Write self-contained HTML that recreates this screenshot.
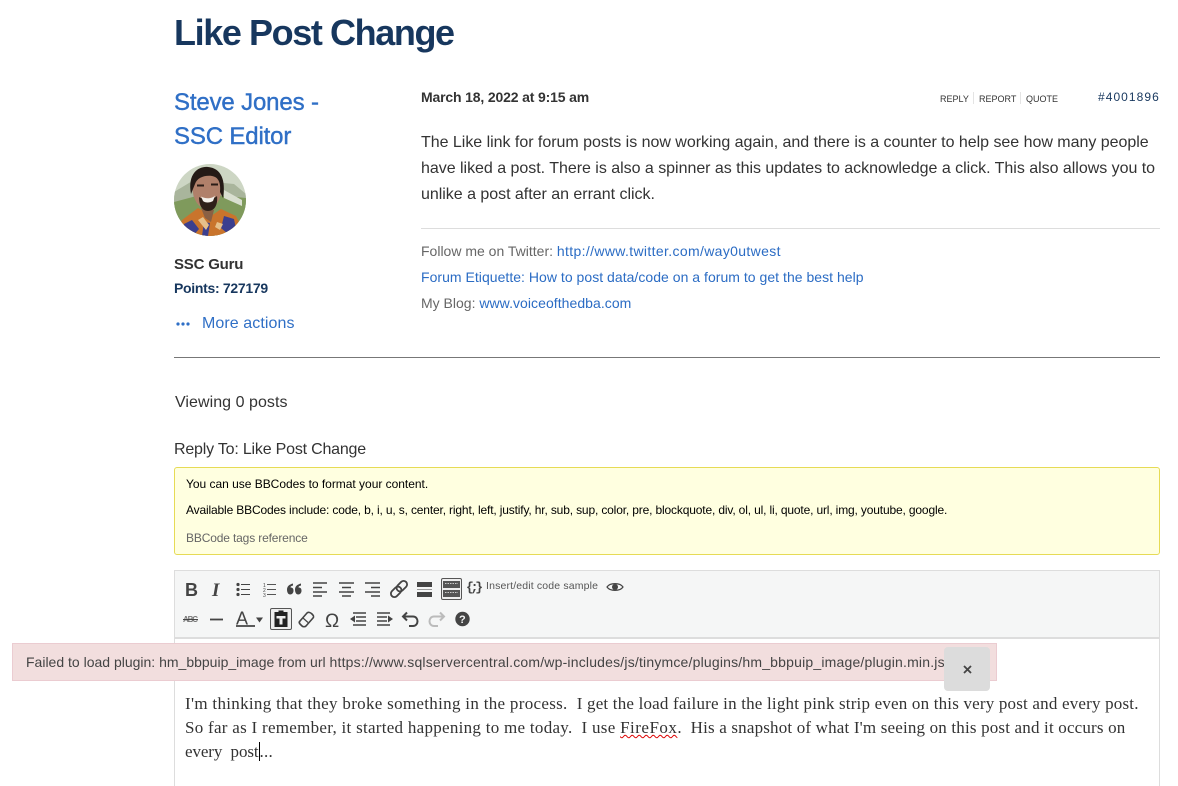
<!DOCTYPE html>
<html><head><meta charset="utf-8"><style>
html,body{margin:0;padding:0;background:#fff;width:1178px;height:786px;overflow:hidden}
body{position:relative;font-family:"Liberation Sans",sans-serif;color:#333}
.t{position:absolute;white-space:nowrap}
a{color:#2b6cc4;text-decoration:none}
svg{position:absolute;overflow:visible}
.b{position:absolute}
.ser{font-family:"Liberation Serif",serif;font-size:17px;color:#333;letter-spacing:.235px}
</style></head><body>
<div class="t" style="left:174px;top:11px;font-size:36px;font-weight:700;color:#17375e;line-height:44px;letter-spacing:-1.4px">Like Post Change</div>
<div class="t" style="left:174px;top:86px;font-size:24px;color:#2f6fc6;line-height:34px;letter-spacing:-.15px;-webkit-text-stroke:.4px #2f6fc6">Steve Jones -<br>SSC Editor</div>
<svg style="left:174px;top:164px" width="72" height="72" viewBox="0 0 72 72">
<defs><clipPath id="c"><circle cx="36" cy="36" r="36"/></clipPath></defs>
<g clip-path="url(#c)"><rect width="72" height="72" fill="#cdd6c4"/><path d="M0 28L20 16 60 20 72 30V72H0Z" fill="#a9b59c"/><path d="M0 38L30 30 72 34V72H0Z" fill="#7f9a5c"/><path d="M50 26l18 10v6l-18-8z" fill="#d9dfd0"/>
<path d="M24 44L31 48 33 53 40 50 47 45 62 52 72 72H0L8 56Z" fill="#c9742c"/><path d="M10 60l8-4 7 9-6 7H8zM50 52l10 3 2 10-8 5-7-6zM30 58l6 1-2 13h-6z" fill="#3b3f8f"/><path d="M24 56l5-3 6 8-3 5zM43 58l6 2-3 6-5-3z" fill="#e6c08a"/><path d="M27 44L40 46 37 58 31 54Z" fill="#8a6044"/>
<ellipse cx="33" cy="24" rx="14.500" ry="21" fill="#b0806a"/><path d="M17 30C13 8 26 2 34 3 47 4 52 16 49 34L46 28C47 18 44 13 38 12 30 11 23 14 21 20Z" fill="#241a16"/>
<path d="M25 33C29 36 39 36 43 32 44 40 41 47 34 47 28 47 25 41 25 33Z" fill="#2e2119"/><path d="M27 32.500C31 35 38 35 41 31.500L39 37C36 39 31 39 29 37Z" fill="#f3f0ea"/><path d="M23 21.500h7M37 20.500h7" stroke="#2a1d17" stroke-width="2"/></g></svg>
<div class="t" style="left:174px;top:255px;font-size:15px;font-weight:700;color:#333;line-height:20px;letter-spacing:-.2px">SSC Guru</div>
<div class="t" style="left:174px;top:280px;font-size:14px;font-weight:700;color:#17375e;line-height:17px;letter-spacing:-.3px">Points: 727179</div>
<svg style="left:176px;top:321px" width="16" height="6"><circle cx="2" cy="3" r="1.600" fill="#2f6fc6"/><circle cx="7" cy="3" r="1.600" fill="#2f6fc6"/><circle cx="12" cy="3" r="1.600" fill="#2f6fc6"/></svg>
<div class="t" style="left:202px;top:314px;font-size:16px;color:#2f6fc6;line-height:19px;letter-spacing:.08px">More actions</div>

<div class="t" style="left:421px;top:89px;font-size:14px;font-weight:700;color:#333;line-height:17px;letter-spacing:-.16px">March 18, 2022 at 9:15 am</div>
<div class="t" style="left:940px;top:93px;font-size:9px;color:#333;line-height:12px">REPLY</div>
<div class="b" style="left:973px;top:92px;width:1px;height:12px;background:#e4e4e4"></div>
<div class="t" style="left:979px;top:93px;font-size:9px;color:#333;line-height:12px">REPORT</div>
<div class="b" style="left:1020px;top:92px;width:1px;height:12px;background:#e4e4e4"></div>
<div class="t" style="left:1026px;top:93px;font-size:9px;color:#333;line-height:12px">QUOTE</div>
<div class="t" style="left:1098px;top:90px;font-size:12px;color:#17375e;line-height:15px;letter-spacing:1.050px">#4001896</div>

<div class="t" style="left:421px;top:130px;font-size:16px;line-height:26px;color:#333;letter-spacing:-.025px">The Like link for forum posts is now working again, and there is a counter to help see how many people<br>have liked a post. There is also a spinner as this updates to acknowledge a click. This also allows you to<br>unlike a post after an errant click.</div>
<div class="b" style="left:421px;top:228px;width:739px;height:1px;background:#ddd"></div>
<div class="t" style="left:421px;top:238px;font-size:14px;line-height:26px;color:#666">Follow me on Twitter: <a style="letter-spacing:.35px">http://www.twitter.com/way0utwest</a><br><a style="letter-spacing:.03px">Forum Etiquette: How to post data/code on a forum to get the best help</a><br>My Blog: <a style="letter-spacing:.05px">www.voiceofthedba.com</a></div>
<div class="b" style="left:174px;top:357px;width:986px;height:1px;background:#777"></div>
<div class="t" style="left:175px;top:393px;font-size:16px;line-height:19px;letter-spacing:.05px">Viewing 0 posts</div>
<div class="t" style="left:174px;top:440px;font-size:16px;line-height:19px;letter-spacing:-.2px">Reply To: Like Post Change</div>

<div class="b" style="left:174px;top:467px;width:984px;height:86px;background:#ffffe0;border:1px solid #e6db55;border-radius:3px"></div>
<div class="t" style="left:186px;top:477px;font-size:12px;line-height:15px;color:#000;letter-spacing:-.02px">You can use BBCodes to format your content.</div>
<div class="t" style="left:186px;top:503px;font-size:12px;line-height:15px;color:#000;letter-spacing:-.155px">Available BBCodes include: code, b, i, u, s, center, right, left, justify, hr, sub, sup, color, pre, blockquote, div, ol, ul, li, quote, url, img, youtube, google.</div>
<div class="t" style="left:186px;top:531px;font-size:12px;line-height:15px;color:#666;letter-spacing:-.15px">BBCode tags reference</div>

<div class="b" style="left:174px;top:570px;width:984px;height:66px;background:#f5f6f6;border:1px solid #ddd;border-bottom:2px solid #ddd"></div>
<div class="b" style="left:174px;top:639px;width:984px;height:147px;background:#fff;border-left:1px solid #ddd;border-right:1px solid #ddd"></div>

<svg style="left:0;top:0" width="1178" height="786" fill="#444" stroke="none">
<text x="185" y="596" font-family="Liberation Sans" font-weight="700" font-size="18" fill="#444">B</text>
<text x="212" y="596" font-family="Liberation Serif" font-weight="700" font-style="italic" font-size="19" fill="#444">I</text>
<path d="M241 584.500h9M241 589.500h9M241 594.500h9" stroke="#444" stroke-width="1.100"/><circle cx="238" cy="584.500" r="1.600"/><circle cx="238" cy="589.500" r="1.600"/><circle cx="238" cy="594.500" r="1.600"/>
<path d="M267 584.500h9M267 589.500h9M267 594.500h9" stroke="#555" stroke-width="1"/><text x="263" y="587" font-family="Liberation Sans" font-size="5" fill="#444">1</text><text x="263" y="592" font-family="Liberation Sans" font-size="5" fill="#444">2</text><text x="263" y="597" font-family="Liberation Sans" font-size="5" fill="#444">3</text>
<path d="M287 590c0-3 2-5 6-6v2c-2 .5-2.500 1.200-2.500 2 2 0 3 1 3 3.300s-1.500 3.700-3.300 3.700c-2 0-3.200-2-3.200-5zM295 590c0-3 2-5 6-6v2c-2 .5-2.500 1.200-2.500 2 2 0 3 1 3 3.300s-1.500 3.700-3.300 3.700c-2 0-3.200-2-3.200-5z" transform="translate(0 -.5)"/>
<path d="M313 583h14M313 587.500h9M313 592h14M313 596h9" stroke="#444" stroke-width="1.500" fill="none"/><path d="M339 583h15M342 587.500h9M339 592h15M342 596h9" stroke="#444" stroke-width="1.500" fill="none"/><path d="M365 583h15M371 587.500h9M365 592h15M371 596h9" stroke="#444" stroke-width="1.500" fill="none"/>
<g transform="rotate(-45 399 589)" fill="none" stroke="#444" stroke-width="1.800"><rect x="389" y="585.500" width="12" height="7" rx="3.500"/><rect x="397" y="585.500" width="12" height="7" rx="3.500"/></g>
<path d="M417 582h15v5h-15zM417 592h15v5h-15z"/><path d="M417 589.500h15" stroke="#999" stroke-width="1"/>
<rect x="441.500" y="578.500" width="20" height="21" rx="1.500" fill="#eee" stroke="#555"/><path d="M443 581h17v7h-17zM443 590h17v7h-17z" fill="#555"/><path d="M445 583.500h13M445 592.500h13" stroke="#ccc" stroke-dasharray="1.500 1" fill="none"/>
<text x="466" y="591" font-family="Liberation Mono" font-weight="700" font-size="13" fill="#444" textLength="17">{;}</text>
<text x="486" y="589" font-family="Liberation Sans" font-size="10.500" fill="#555" textLength="112">Insert/edit code sample</text>
<path d="M607 587c3-4.500 13-4.500 16 0-3 4.500-13 4.500-16 0z" fill="none" stroke="#444" stroke-width="1.200"/><circle cx="615" cy="587" r="3"/>
<text x="183" y="622" font-family="Liberation Sans" font-size="8" font-weight="700" fill="#777" textLength="15">ABC</text><path d="M183 619.500h15" stroke="#444"/>
<path d="M210 619.500h13" stroke="#444" stroke-width="1.800"/>
<text x="236" y="624.500" font-family="Liberation Sans" font-size="18" fill="#444" textLength="16">A</text><path d="M236 626h19" stroke="#444" stroke-width="1.800"/><path d="M256 617.500h7l-3.500 5z"/>
<rect x="270.500" y="608.500" width="21" height="21" rx="1.500" fill="#eee" stroke="#555"/><path d="M274.500 612h4v-1.500h5v1.500h4v15h-13z" fill="#222"/><path d="M276.500 616h9v2.500h-3v6h-3v-6h-3z" fill="#eee"/>
<path d="M300 621l7-8c1-1 3-1 5 1s2 3 1 4l-7 8c-1 1-3 1-4 0l-2-2c-1-1-1-2 0-3z" fill="none" stroke="#444" stroke-width="1.600"/><path d="M303 618l5 4.500" stroke="#444" stroke-width="1.200"/>
<text x="325" y="627" font-family="Liberation Sans" font-size="19" fill="#444" textLength="15">Ω</text>
<path d="M353 613h13M356 617h10M356 621h10M353 625h13" stroke="#444" stroke-width="1.500"/><path d="M350 619l5-3.500v7z"/>
<path d="M377 613h13M377 617h10M377 621h10M377 625h13" stroke="#444" stroke-width="1.500"/><path d="M393 619l-5-3.500v7z"/>
<path d="M407 612.500l-4 4 4 4M403 616.500h10c6 0 6 9.500 0 9.500h-4" fill="none" stroke="#444" stroke-width="2"/>
<path d="M440 612.500l4 4-4 4M444 616.500h-10c-6 0-6 9.500 0 9.500h4" fill="none" stroke="#bbb" stroke-width="2"/>
<circle cx="462.500" cy="619" r="7.200"/><text x="459" y="623" font-family="Liberation Sans" font-size="11" font-weight="700" fill="#f5f6f6">?</text>
</svg>

<div class="t ser" style="left:185px;top:692px;line-height:24px"><span style="letter-spacing:.305px">I'm thinking that they broke something in the process.&nbsp; </span><span style="letter-spacing:.19px">I get the load failure in the light pink strip even on this very post and every post.</span><br><span style="letter-spacing:.28px">So far as I remember, it started happening to me today.&nbsp; I use </span><span style="letter-spacing:.5px;text-decoration:underline wavy #d00 1px">FireFox</span><span style="letter-spacing:.175px">.&nbsp; His a snapshot of what I'm seeing on this post and it occurs on</span><br><span style="letter-spacing:-.1px">every&nbsp; post</span><span style="border-left:1px solid #000"></span>...</div>

<div class="b" style="left:12px;top:643px;width:983px;height:36px;background:#f2dede;border:1px solid #ebccd1"></div>
<div class="t" style="left:26px;top:654px;font-size:14px;line-height:17px;color:#444">Failed to load plugin: hm_bbpuip_image from url <span style="letter-spacing:.19px">https://www.sqlservercentral.com/wp-includes/js/tinymce/plugins/hm_bbpuip_image/plugin.min.js</span></div>
<div class="b" style="left:944px;top:647px;width:46px;height:44px;background:#dcdcdc;border-radius:4px"></div>
<svg style="left:963px;top:665px" width="10" height="10"><path d="M1 1l7 7M8 1l-7 7" stroke="#444" stroke-width="1.800"/></svg>
</body></html>
